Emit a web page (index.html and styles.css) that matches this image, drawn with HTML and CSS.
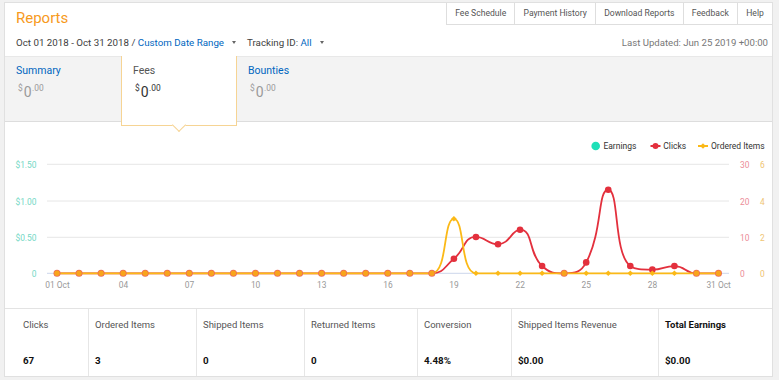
FILE: index.html
```html
<!DOCTYPE html>
<html>
<head>
<meta charset="utf-8">
<title>Reports</title>
<link rel="stylesheet" href="styles.css">
</head>
<body>
<div class="card">
  <div class="header">
    <div class="top-row">
      <h1 class="title">Reports</h1>
      <nav class="nav">
        <a class="nav-item">Fee Schedule</a>
        <a class="nav-item">Payment History</a>
        <a class="nav-item">Download Reports</a>
        <a class="nav-item">Feedback</a>
        <a class="nav-item">Help</a>
      </nav>
    </div>
    <div class="filter-row">
      <div class="filters">
        <span>Oct 01 2018 - Oct 31 2018 / <a class="link">Custom Date Range</a></span><span class="caret"></span><span>Tracking ID: <a class="link">All</a></span><span class="caret"></span>
      </div>
      <div class="updated">Last Updated: Jun 25 2019 +00:00</div>
    </div>
  </div>

  <div class="summary">
    <div class="tab">
      <div class="tab-label">Summary</div>
      <div class="tab-value"><span class="cur">$</span>0<span class="dec">.00</span></div>
    </div>
    <div class="tab active">
      <div class="tab-label">Fees</div>
      <div class="tab-value"><span class="cur">$</span>0<span class="dec">.00</span></div>
    </div>
    <div class="tab">
      <div class="tab-label">Bounties</div>
      <div class="tab-value"><span class="cur">$</span>0<span class="dec">.00</span></div>
    </div>
  </div>

  <div class="chart">
    <svg class="chart-svg" width="767" height="186" viewBox="5 122 767 186">
      <defs>
        <path id="dia" d="M0,-2.8 L2.8,0 L0,2.8 L-2.8,0 Z"/>
      </defs>
      <!-- legend -->
      <g class="legend">
        <circle cx="595.7" cy="146" r="4.3" fill="#1fe0b8"/>
        <text x="603.4" y="149">Earnings</text>
        <line x1="650.5" y1="146" x2="660.5" y2="146" stroke="#e3303d" stroke-width="2"/>
        <circle cx="655.5" cy="146" r="3" fill="#e3303d"/>
        <text x="663.3" y="149">Clicks</text>
        <line x1="698" y1="146" x2="708" y2="146" stroke="#fbb917" stroke-width="2"/>
        <use href="#dia" x="703" y="146" fill="#fbb917"/>
        <text x="711" y="149">Ordered Items</text>
      </g>
      <!-- grid -->
      <g stroke="#e6e6e6" stroke-width="1">
        <line x1="47" y1="164.3" x2="729" y2="164.3"/>
        <line x1="47" y1="201" x2="729" y2="201"/>
        <line x1="47" y1="237.3" x2="729" y2="237.3"/>
      </g>
      <line x1="47" y1="273.3" x2="729" y2="273.3" stroke="#ccd6eb" stroke-width="1"/>
      <!-- axis labels -->
      <g class="ax-left" text-anchor="end">
        <text x="36.5" y="168.3">$1.50</text>
        <text x="36.5" y="205">$1.00</text>
        <text x="36.5" y="241.3">$0.50</text>
        <text x="36.5" y="277.3">0</text>
      </g>
      <g class="ax-red">
        <text x="740" y="168.3">30</text>
        <text x="740" y="205">20</text>
        <text x="740" y="241.3">10</text>
        <text x="740" y="277.3">0</text>
      </g>
      <g class="ax-orange">
        <text x="760" y="168.3">6</text>
        <text x="760" y="205">4</text>
        <text x="760" y="241.3">2</text>
        <text x="760" y="277.3">0</text>
      </g>
      <g class="ax-x" text-anchor="middle">
        <text x="57.5" y="288">01 Oct</text>
        <text x="123.4" y="288">04</text>
        <text x="189.5" y="288">07</text>
        <text x="255.6" y="288">10</text>
        <text x="321.8" y="288">13</text>
        <text x="387.9" y="288">16</text>
        <text x="454" y="288">19</text>
        <text x="520.2" y="288">22</text>
        <text x="586.3" y="288">25</text>
        <text x="652.5" y="288">28</text>
        <text x="718.6" y="288">31 Oct</text>
      </g>
      <!-- series -->
      <path fill="none" stroke="#e3303d" stroke-width="1.8" d="M57,273.3 L431.85,273.3 C443.87,273.3 443.76,267.13 453.9,258.77 C465.81,248.96 463.34,236.97 475.95,236.97 C485.39,236.97 487.69,244.23 498,244.23 C509.73,244.23 511.6,229.7 520.05,229.7 C533.65,229.7 527.84,252.73 542.1,266.03 C549.89,273.3 553.44,273.3 564.15,273.3 C575.49,273.3 580.8,272.63 586.2,262.4 C602.86,230.84 597.47,189.74 608.25,189.74 C619.52,189.74 613.1,253.1 630.3,266.03 C635.14,269.67 641.32,269.67 652.35,269.67 C663.38,269.67 663.59,266.03 674.4,266.03 C685.63,266.03 685.14,273.3 696.45,273.3 L718.5,273.3"/>
      <path fill="none" stroke="#fbb917" stroke-width="1.8" d="M57,273.3 L431.85,273.3 C447.9,273.3 442.87,218.8 453.9,218.8 C464.93,218.8 459.9,273.3 475.95,273.3 L718.5,273.3"/>
      <!-- click markers with value -->
      <g fill="#e3303d">
        <circle cx="453.9" cy="258.77" r="3.3"/>
        <circle cx="475.95" cy="236.97" r="3.3"/>
        <circle cx="498" cy="244.23" r="3.3"/>
        <circle cx="520.05" cy="229.7" r="3.3"/>
        <circle cx="542.1" cy="266.03" r="3.3"/>
        <circle cx="586.2" cy="262.4" r="3.3"/>
        <circle cx="608.25" cy="189.74" r="3.3"/>
        <circle cx="630.3" cy="266.03" r="3.3"/>
        <circle cx="652.35" cy="269.67" r="3.3"/>
        <circle cx="674.4" cy="266.03" r="3.3"/>
      </g>
      <!-- ordered markers -->
      <g fill="#fbb917">
        <use href="#dia" x="453.9" y="218.8"/>
        <use href="#dia" x="475.95" y="273.3"/>
        <use href="#dia" x="498" y="273.3"/>
        <use href="#dia" x="520.05" y="273.3"/>
        <use href="#dia" x="542.1" y="273.3"/>
        <use href="#dia" x="586.2" y="273.3"/>
        <use href="#dia" x="608.25" y="273.3"/>
        <use href="#dia" x="630.3" y="273.3"/>
        <use href="#dia" x="652.35" y="273.3"/>
        <use href="#dia" x="674.4" y="273.3"/>
      </g>
      <!-- zero-value markers (clicks + ordered overlap) -->
      <g fill="#ec6a5a">
        <circle cx="57" cy="273.3" r="3.5"/><circle cx="79.05" cy="273.3" r="3.5"/><circle cx="101.1" cy="273.3" r="3.5"/><circle cx="123.15" cy="273.3" r="3.5"/><circle cx="145.2" cy="273.3" r="3.5"/><circle cx="167.25" cy="273.3" r="3.5"/><circle cx="189.3" cy="273.3" r="3.5"/><circle cx="211.35" cy="273.3" r="3.5"/><circle cx="233.4" cy="273.3" r="3.5"/><circle cx="255.45" cy="273.3" r="3.5"/><circle cx="277.5" cy="273.3" r="3.5"/><circle cx="299.55" cy="273.3" r="3.5"/><circle cx="321.6" cy="273.3" r="3.5"/><circle cx="343.65" cy="273.3" r="3.5"/><circle cx="365.7" cy="273.3" r="3.5"/><circle cx="387.75" cy="273.3" r="3.5"/><circle cx="409.8" cy="273.3" r="3.5"/><circle cx="431.85" cy="273.3" r="3.5"/><circle cx="564.15" cy="273.3" r="3.5"/><circle cx="696.45" cy="273.3" r="3.5"/><circle cx="718.5" cy="273.3" r="3.5"/>
      </g>
      <g fill="#f8a41c">
        <circle cx="57" cy="273.3" r="2.7"/><circle cx="79.05" cy="273.3" r="2.7"/><circle cx="101.1" cy="273.3" r="2.7"/><circle cx="123.15" cy="273.3" r="2.7"/><circle cx="145.2" cy="273.3" r="2.7"/><circle cx="167.25" cy="273.3" r="2.7"/><circle cx="189.3" cy="273.3" r="2.7"/><circle cx="211.35" cy="273.3" r="2.7"/><circle cx="233.4" cy="273.3" r="2.7"/><circle cx="255.45" cy="273.3" r="2.7"/><circle cx="277.5" cy="273.3" r="2.7"/><circle cx="299.55" cy="273.3" r="2.7"/><circle cx="321.6" cy="273.3" r="2.7"/><circle cx="343.65" cy="273.3" r="2.7"/><circle cx="365.7" cy="273.3" r="2.7"/><circle cx="387.75" cy="273.3" r="2.7"/><circle cx="409.8" cy="273.3" r="2.7"/><circle cx="431.85" cy="273.3" r="2.7"/><circle cx="564.15" cy="273.3" r="2.7"/><circle cx="696.45" cy="273.3" r="2.7"/><circle cx="718.5" cy="273.3" r="2.7"/>
      </g>
    </svg>
  </div>

  <div class="stats">
    <div class="stat">
      <div class="stat-label">Clicks</div>
      <div class="stat-value">67</div>
    </div>
    <div class="stat">
      <div class="stat-label">Ordered Items</div>
      <div class="stat-value">3</div>
    </div>
    <div class="stat">
      <div class="stat-label">Shipped Items</div>
      <div class="stat-value">0</div>
    </div>
    <div class="stat">
      <div class="stat-label">Returned Items</div>
      <div class="stat-value">0</div>
    </div>
    <div class="stat">
      <div class="stat-label">Conversion</div>
      <div class="stat-value">4.48%</div>
    </div>
    <div class="stat">
      <div class="stat-label">Shipped Items Revenue</div>
      <div class="stat-value">$0.00</div>
    </div>
    <div class="stat total">
      <div class="stat-label">Total Earnings</div>
      <div class="stat-value">$0.00</div>
    </div>
  </div>
</div>
</body>
</html>
```

FILE: styles.css
```css
body {
  margin: 0;
  padding: 2px 0 0 4px;
  background: #f1f1f1;
  font-family: Roboto, "Liberation Sans", Arial, sans-serif;
  color: #333;
}

.card {
  width: 769px;
  height: 375px;
  box-sizing: border-box;
  border: 1px solid #e0e0e0;
  background: #fff;
}

/* header */
.header {
  height: 53px;
}

.top-row {
  display: flex;
  justify-content: space-between;
  align-items: flex-start;
  height: 24px;
}

.title {
  margin: 6px 0 0 11px;
  font-size: 15px;
  line-height: 18px;
  font-weight: 400;
  color: #f79a1c;
}

.nav {
  display: flex;
}

.nav-item {
  height: 21px;
  line-height: 21px;
  padding: 0 8.2px;
  border-left: 1px solid #dedede;
  border-bottom: 1px solid #dedede;
  font-size: 8.6px;
  color: #555;
  white-space: nowrap;
}

.filter-row {
  display: flex;
  justify-content: space-between;
  align-items: center;
  margin-top: 8.7px;
  padding: 0 4px 0 11px;
  font-size: 9.6px;
  line-height: 14px;
}

.filters {
  color: #404040;
  white-space: nowrap;
  font-size: 9.75px;
}

.link {
  color: #0066c0;
}

.caret {
  display: inline-block;
  width: 0;
  height: 0;
  border-left: 2.5px solid transparent;
  border-right: 2.5px solid transparent;
  border-top: 3px solid #666;
  margin: 0 11px 1px 8px;
  vertical-align: middle;
}

.updated {
  color: #777;
  white-space: nowrap;
}

/* summary tabs */
.summary {
  display: flex;
  height: 66px;
  box-sizing: border-box;
  border-top: 1px solid #e8e8e8;
  border-bottom: 1px solid #dddddd;
  background: #f3f3f3;
}

.tab {
  width: 116px;
  box-sizing: border-box;
  padding: 7px 0 0 11px;
}

.tab.active {
  position: relative;
  z-index: 1;
  margin-top: -1px;
  height: 70px;
  padding-top: 8px;
  background: #fff;
  border: 1px solid #f6d494;
  border-top: none;
}

.tab.active::after {
  content: "";
  position: absolute;
  left: 50%;
  bottom: -5px;
  width: 10px;
  height: 10px;
  margin-left: -5px;
  box-sizing: border-box;
  background: #fff;
  border-right: 1px solid #f6d494;
  border-bottom: 1px solid #f6d494;
  transform: rotate(45deg);
}

.tab-label {
  font-size: 10.5px;
  line-height: 14px;
  color: #0066c0;
}

.tab.active .tab-label {
  color: #555;
}

.tab-value {
  margin-top: 6px;
  padding-left: 2px;
  font-size: 14px;
  line-height: 16px;
  color: #9a9a9a;
}

.tab.active .tab-value {
  color: #333;
}

.cur,
.dec {
  display: inline-block;
  vertical-align: top;
  font-size: 8.4px;
  line-height: 1;
}

.cur {
  margin-right: 1px;
}

.dec {
  margin-left: 0.5px;
}

/* chart */
.chart {
  height: 186px;
}

.chart-svg {
  display: block;
  font-family: Roboto, "Liberation Sans", Arial, sans-serif;
  font-size: 8.4px;
}

.legend text {
  fill: #333;
  font-size: 8.5px;
}

.ax-left text {
  fill: #74d8c5;
}

.ax-red text {
  fill: #ec8d98;
}

.ax-orange text {
  fill: #efc472;
}

.ax-x text {
  fill: #999;
}

/* stats */
.stats {
  display: grid;
  grid-template-columns: 83px 108px 108px 113px 94px 147px 1fr;
  height: 68px;
  box-sizing: border-box;
  border-top: 1px solid #e3e3e3;
}

.stat {
  padding: 9px 0 0 6px;
  border-left: 1px solid #e6e6e6;
}

.stat:first-child {
  border-left: none;
  padding-left: 18px;
}

.stat-label {
  font-size: 9.5px;
  line-height: 14px;
  color: #555;
  white-space: nowrap;
}

.stat-value {
  margin-top: 22px;
  font-size: 9.8px;
  line-height: 14px;
  font-weight: 700;
  color: #111;
}

.total .stat-label {
  font-weight: 700;
  color: #111;
}
```
